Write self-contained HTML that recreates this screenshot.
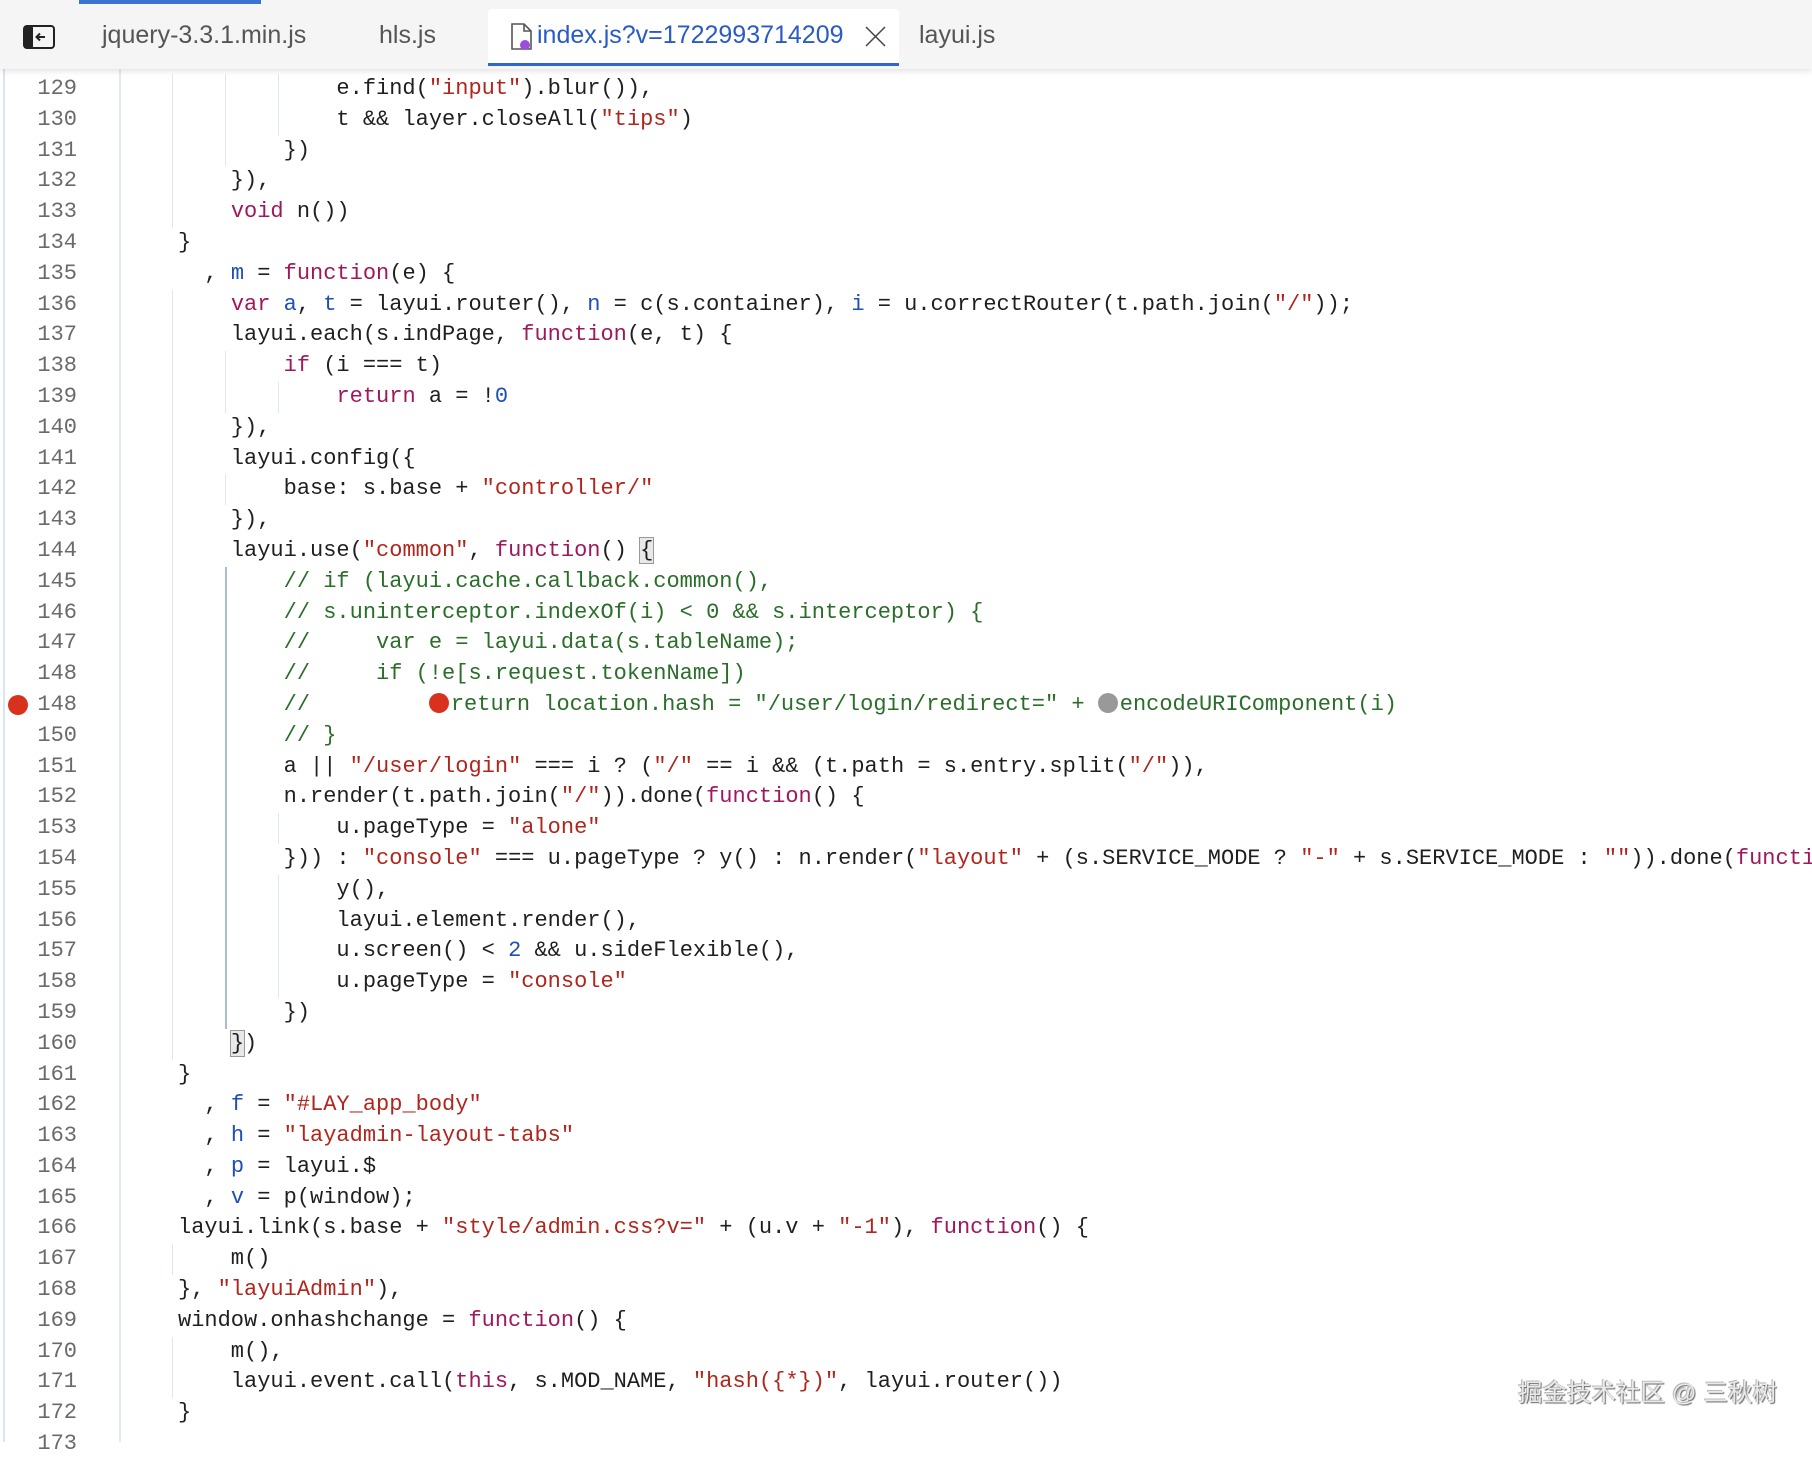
<!DOCTYPE html>
<html><head><meta charset="utf-8"><style>
*{margin:0;padding:0;box-sizing:border-box}
body{width:1812px;height:1442px;overflow:hidden;background:#fff;position:relative;font-family:"Liberation Mono",monospace}
.tabs{position:absolute;left:0;top:0;width:1812px;height:69px;background:#f5f5f5;box-shadow:0 2px 6px rgba(0,0,0,.12);z-index:5;font-family:"Liberation Sans",sans-serif;font-size:25px;color:#555}
.tabs .t{position:absolute;top:21px;white-space:nowrap}
.topbar{position:absolute;left:79px;top:0;width:182px;height:4px;background:#3b73d1}
.active{position:absolute;left:488px;top:9px;width:411px;height:57px;background:#fff;border-bottom:3px solid #2f66c9;border-radius:4px 4px 0 0}
.lnbox{position:absolute;left:0;top:74px;width:1812px}
.l{position:relative;height:30.8px;line-height:30.8px;font-size:22px;white-space:pre;color:#1f1f1f}
.n{position:absolute;left:0;width:77px;text-align:right;color:#6a6a6a}
.c0{position:absolute;left:178px;top:0}
.k{color:#a0185c}.s{color:#b0261d}.v{color:#1e4fb4}.m{color:#1e4fb4}.c{color:#2a6e2a}
.g1{background:linear-gradient(#dfe6f0,#dfe6f0) 172px 0/1px 100% no-repeat}
.g2{background:linear-gradient(#dfe6f0,#dfe6f0) 172px 0/1px 100% no-repeat,linear-gradient(#dfe6f0,#dfe6f0) 225px 0/1px 100% no-repeat}
.g3{background:linear-gradient(#dfe6f0,#dfe6f0) 172px 0/1px 100% no-repeat,linear-gradient(#dfe6f0,#dfe6f0) 225px 0/1px 100% no-repeat,linear-gradient(#dfe6f0,#dfe6f0) 278px 0/1px 100% no-repeat}
.a2{background:linear-gradient(#dfe6f0,#dfe6f0) 172px 0/1px 100% no-repeat,linear-gradient(#a9bbd8,#a9bbd8) 225px 0/2px 100% no-repeat}
.a3{background:linear-gradient(#dfe6f0,#dfe6f0) 172px 0/1px 100% no-repeat,linear-gradient(#a9bbd8,#a9bbd8) 225px 0/2px 100% no-repeat,linear-gradient(#dfe6f0,#dfe6f0) 278px 0/1px 100% no-repeat}
.dot{display:inline-block;width:20px;height:20px;border-radius:50%;vertical-align:-3px;margin-right:2px}
.bx{background:#e8e8e8;outline:1px solid #999}
.wm{position:absolute;left:1518px;top:1374px;font-family:"Liberation Sans","Noto Sans CJK SC",sans-serif;font-size:24.5px;color:#e9e9e9;text-shadow:1px 1px 1px #666,-1px -1px 0 #bbb;white-space:nowrap}
</style></head><body>
<div class="tabs">
<div class="topbar"></div>
<svg style="position:absolute;left:23px;top:25px" width="32" height="24" viewBox="0 0 32 24"><rect x="1" y="1" width="30" height="22" rx="3" fill="none" stroke="#222" stroke-width="2"/><rect x="1" y="1" width="9" height="22" rx="2" fill="#222"/><path d="M22 12H14M17 8.5L13.5 12 17 15.5" stroke="#222" stroke-width="2" fill="none"/></svg>
<div class="t" style="left:102px">jquery-3.3.1.min.js</div>
<div class="t" style="left:379px">hls.js</div>
<div class="active"></div>
<svg style="position:absolute;left:510px;top:23px" width="24" height="28" viewBox="0 0 24 28"><path d="M2 1h12l7 7v18H2z" fill="none" stroke="#555" stroke-width="1.6"/><path d="M14 1v7h7" fill="none" stroke="#555" stroke-width="1.6"/><circle cx="15" cy="22" r="5" fill="#9b4fd9"/></svg>
<div class="t" style="left:537px;color:#2a5bc4">index.js?v=1722993714209</div>
<svg style="position:absolute;left:865px;top:26px" width="21" height="21" viewBox="0 0 21 21"><path d="M1 1L20 20M20 1L1 20" stroke="#444" stroke-width="1.5"/></svg>
<div class="t" style="left:919px">layui.js</div>
</div>
<div style="position:absolute;left:3px;top:69px;width:2px;height:1373px;background:#dbe4f3"></div>
<div style="position:absolute;left:119px;top:69px;width:2px;height:1373px;background:#e3eaf5"></div>
<div class="lnbox">
<div class="l g3"><span class="n">129</span><span class="c0">            e.find(<span class="s">"input"</span>).blur()),</span></div>
<div class="l g3"><span class="n">130</span><span class="c0">            t &amp;&amp; layer.closeAll(<span class="s">"tips"</span>)</span></div>
<div class="l g2"><span class="n">131</span><span class="c0">        })</span></div>
<div class="l g1"><span class="n">132</span><span class="c0">    }),</span></div>
<div class="l g1"><span class="n">133</span><span class="c0">    <span class="k">void</span> n())</span></div>
<div class="l"><span class="n">134</span><span class="c0">}</span></div>
<div class="l"><span class="n">135</span><span class="c0">  , <span class="v">m</span> = <span class="k">function</span>(e) {</span></div>
<div class="l g1"><span class="n">136</span><span class="c0">    <span class="k">var</span> <span class="v">a</span>, <span class="v">t</span> = layui.router(), <span class="v">n</span> = c(s.container), <span class="v">i</span> = u.correctRouter(t.path.join(<span class="s">"/"</span>));</span></div>
<div class="l g1"><span class="n">137</span><span class="c0">    layui.each(s.indPage, <span class="k">function</span>(e, t) {</span></div>
<div class="l g2"><span class="n">138</span><span class="c0">        <span class="k">if</span> (i === t)</span></div>
<div class="l g3"><span class="n">139</span><span class="c0">            <span class="k">return</span> a = !<span class="m">0</span></span></div>
<div class="l g1"><span class="n">140</span><span class="c0">    }),</span></div>
<div class="l g1"><span class="n">141</span><span class="c0">    layui.config({</span></div>
<div class="l g2"><span class="n">142</span><span class="c0">        base: s.base + <span class="s">"controller/"</span></span></div>
<div class="l g1"><span class="n">143</span><span class="c0">    }),</span></div>
<div class="l g1"><span class="n">144</span><span class="c0">    layui.use(<span class="s">"common"</span>, <span class="k">function</span>() <span class="bx">{</span></span></div>
<div class="l a2"><span class="n">145</span><span class="c0 c">        // if (layui.cache.callback.common(),</span></div>
<div class="l a2"><span class="n">146</span><span class="c0 c">        // s.uninterceptor.indexOf(i) &lt; 0 &amp;&amp; s.interceptor) {</span></div>
<div class="l a2"><span class="n">147</span><span class="c0 c">        //     var e = layui.data(s.tableName);</span></div>
<div class="l a2"><span class="n">148</span><span class="c0 c">        //     if (!e[s.request.tokenName])</span></div>
<div class="l a2"><span class="dot" style="position:absolute;left:8px;top:5px;background:#d8321f"></span><span class="n">148</span><span class="c0 c">        //         <span class="dot" style="background:#d8321f"></span>return location.hash = "/user/login/redirect=" + <span class="dot" style="background:#999"></span>encodeURIComponent(i)</span></div>
<div class="l a2"><span class="n">150</span><span class="c0 c">        // }</span></div>
<div class="l a2"><span class="n">151</span><span class="c0">        a || <span class="s">"/user/login"</span> === i ? (<span class="s">"/"</span> == i &amp;&amp; (t.path = s.entry.split(<span class="s">"/"</span>)),</span></div>
<div class="l a2"><span class="n">152</span><span class="c0">        n.render(t.path.join(<span class="s">"/"</span>)).done(<span class="k">function</span>() {</span></div>
<div class="l a3"><span class="n">153</span><span class="c0">            u.pageType = <span class="s">"alone"</span></span></div>
<div class="l a2"><span class="n">154</span><span class="c0">        })) : <span class="s">"console"</span> === u.pageType ? y() : n.render(<span class="s">"layout"</span> + (s.SERVICE_MODE ? <span class="s">"-"</span> + s.SERVICE_MODE : <span class="s">""</span>)).done(<span class="k">function</span>() {</span></div>
<div class="l a3"><span class="n">155</span><span class="c0">            y(),</span></div>
<div class="l a3"><span class="n">156</span><span class="c0">            layui.element.render(),</span></div>
<div class="l a3"><span class="n">157</span><span class="c0">            u.screen() &lt; <span class="m">2</span> &amp;&amp; u.sideFlexible(),</span></div>
<div class="l a3"><span class="n">158</span><span class="c0">            u.pageType = <span class="s">"console"</span></span></div>
<div class="l a2"><span class="n">159</span><span class="c0">        })</span></div>
<div class="l g1"><span class="n">160</span><span class="c0">    <span class="bx">}</span>)</span></div>
<div class="l"><span class="n">161</span><span class="c0">}</span></div>
<div class="l"><span class="n">162</span><span class="c0">  , <span class="v">f</span> = <span class="s">"#LAY_app_body"</span></span></div>
<div class="l"><span class="n">163</span><span class="c0">  , <span class="v">h</span> = <span class="s">"layadmin-layout-tabs"</span></span></div>
<div class="l"><span class="n">164</span><span class="c0">  , <span class="v">p</span> = layui.$</span></div>
<div class="l"><span class="n">165</span><span class="c0">  , <span class="v">v</span> = p(window);</span></div>
<div class="l"><span class="n">166</span><span class="c0">layui.link(s.base + <span class="s">"style/admin.css?v="</span> + (u.v + <span class="s">"-1"</span>), <span class="k">function</span>() {</span></div>
<div class="l g1"><span class="n">167</span><span class="c0">    m()</span></div>
<div class="l"><span class="n">168</span><span class="c0">}, <span class="s">"layuiAdmin"</span>),</span></div>
<div class="l"><span class="n">169</span><span class="c0">window.onhashchange = <span class="k">function</span>() {</span></div>
<div class="l g1"><span class="n">170</span><span class="c0">    m(),</span></div>
<div class="l g1"><span class="n">171</span><span class="c0">    layui.event.call(<span class="k">this</span>, s.MOD_NAME, <span class="s">"hash({*})"</span>, layui.router())</span></div>
<div class="l"><span class="n">172</span><span class="c0">}</span></div>
<div class="l"><span class="n">173</span><span class="c0"></span></div>
</div>
<div class="wm">掘金技术社区 @ 三秋树</div>
</body></html>
